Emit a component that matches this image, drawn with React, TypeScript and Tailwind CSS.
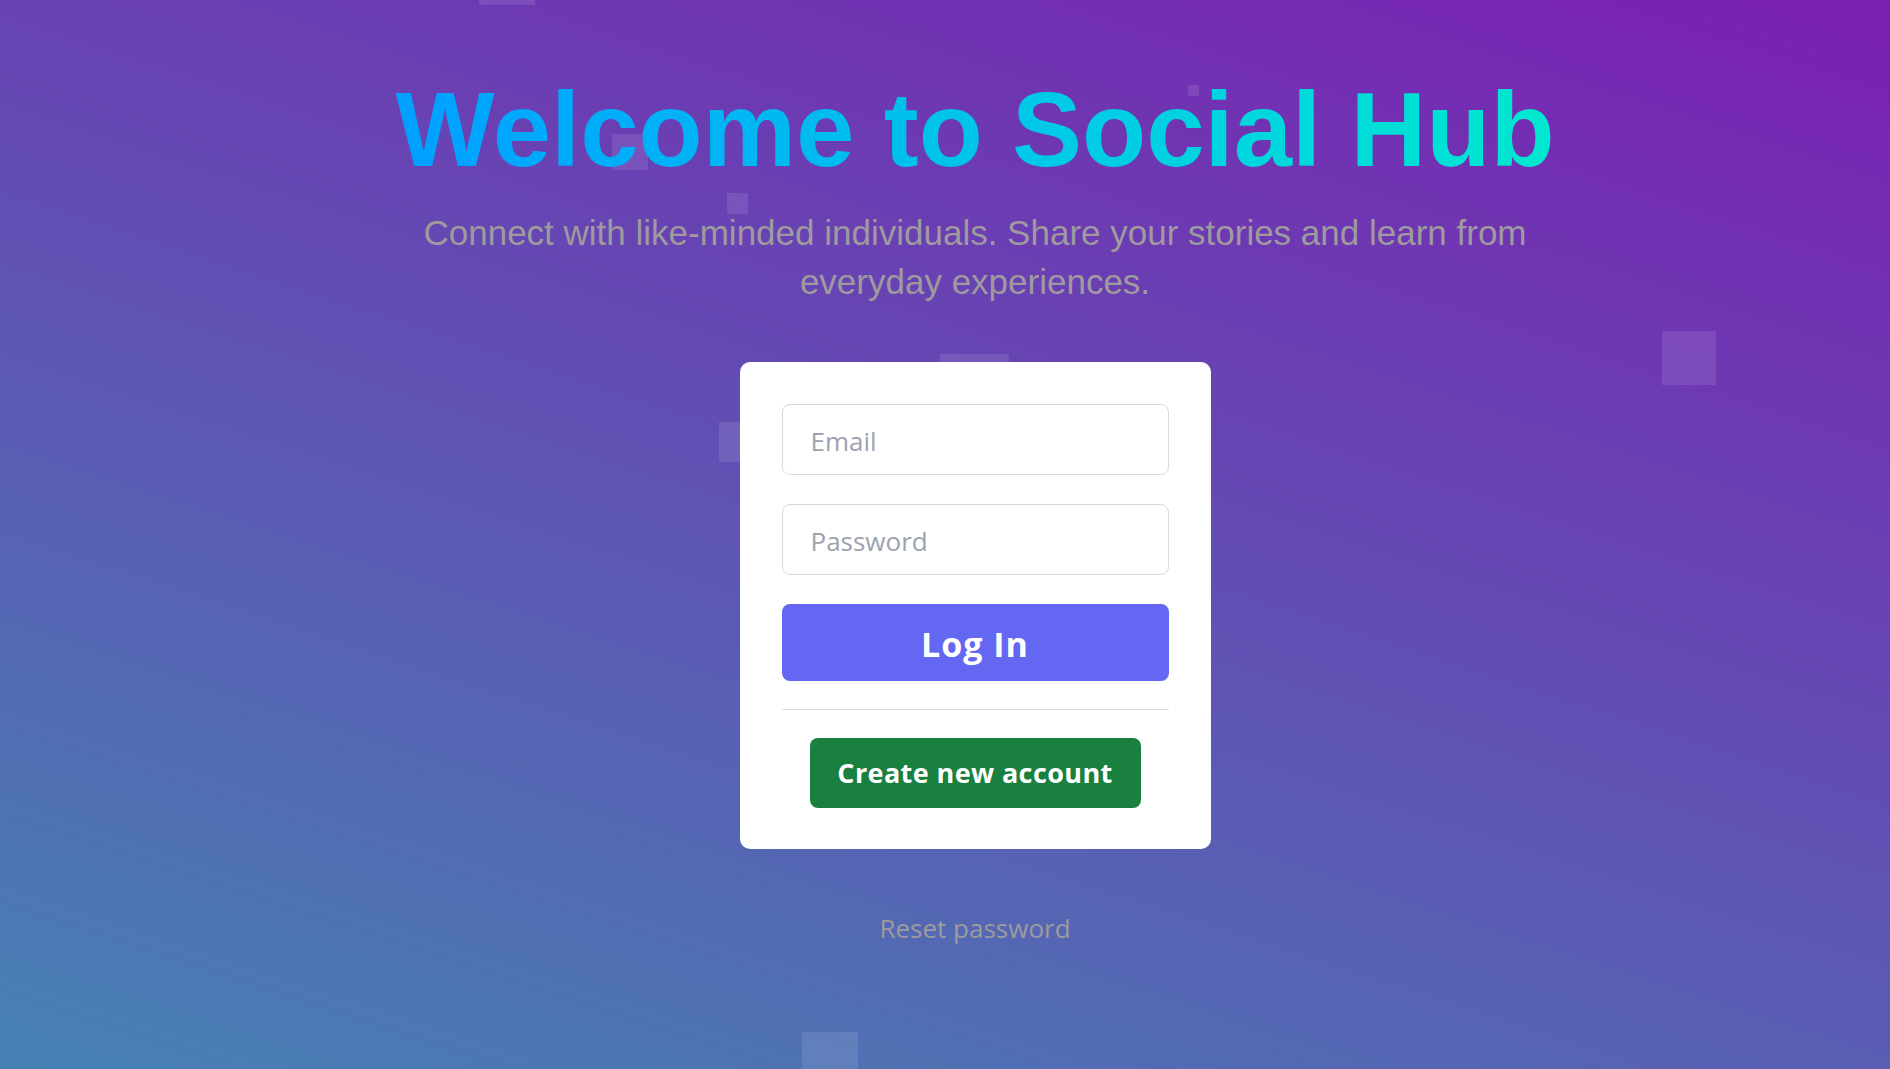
const squares = [
  'left-[479px] top-[-51px] w-[56px] h-[56px]',
  'left-[612px] top-[134px] w-[36px] h-[36px]',
  'left-[727px] top-[193px] w-[21px] h-[21px]',
  'left-[1188px] top-[85px] w-[11px] h-[11px]',
  'left-[940px] top-[354px] w-[69px] h-[69px]',
  'left-[719px] top-[422px] w-[40px] h-[40px]',
  'left-[1662px] top-[331px] w-[54px] h-[54px]',
  'left-[802px] top-[1032px] w-[56px] h-[56px]',
];

export default function App() {
  return (
    <div className="relative h-screen w-full overflow-hidden bg-[linear-gradient(18deg,#4682b4,#7b1fb2)]">
      {/* floating squares */}
      {squares.map((s, i) => (
        <div key={i} className={`absolute bg-white/10 ${s}`} />
      ))}

      <div className="relative z-10 flex flex-col items-center pl-[60px] pt-[77px]">
        <h1 className="bg-linear-to-r from-[#009fff] to-[#00e8cf] bg-clip-text font-['Liberation_Sans',Arial,sans-serif] text-[105px] font-bold leading-none text-transparent">
          Welcome to Social Hub
        </h1>
        <p className="mt-[26px] max-w-[1150px] text-center font-['Liberation_Sans',Arial,sans-serif] text-[35px] leading-[49px] text-[#9e9a9e]">
          Connect with like-minded individuals. Share your stories and learn from everyday experiences.
        </p>

        {/* Login card */}
        <div className="mt-[56px] flex w-[471px] flex-col rounded-[10px] bg-white px-[42px] pt-[42px] pb-[41px] font-['Open_Sans',sans-serif]">
          <input
            type="email"
            placeholder="Email"
            className="h-[71px] w-full rounded-[8px] border border-[#d8dade] px-[28px] pt-[2px] text-[26px] text-gray-800 outline-none placeholder:text-[#9ca3af]"
          />
          <input
            type="password"
            placeholder="Password"
            className="mt-[29px] h-[71px] w-full rounded-[8px] border border-[#d8dade] px-[28px] pt-[2px] text-[26px] text-gray-800 outline-none placeholder:text-[#9ca3af]"
          />
          <button className="mt-[29px] h-[77px] w-full rounded-[8px] bg-[#6467f1] pt-[3px] text-[34px] font-bold tracking-[1px] text-white">
            Log In
          </button>
          <div className="mt-[28px] h-px w-full bg-[#dadde1]" />
          <div className="mt-[28px] flex justify-center">
            <button className="h-[70px] w-[331px] rounded-[8px] bg-[#1a803f] pt-[1px] text-[27px] font-bold tracking-[0.4px] text-white">
              Create new account
            </button>
          </div>
        </div>

        <a className="mt-[61px] font-['Open_Sans',sans-serif] text-[26px] leading-[36px] text-[#9e9a9e]">
          Reset password
        </a>
      </div>
    </div>
  );
}
